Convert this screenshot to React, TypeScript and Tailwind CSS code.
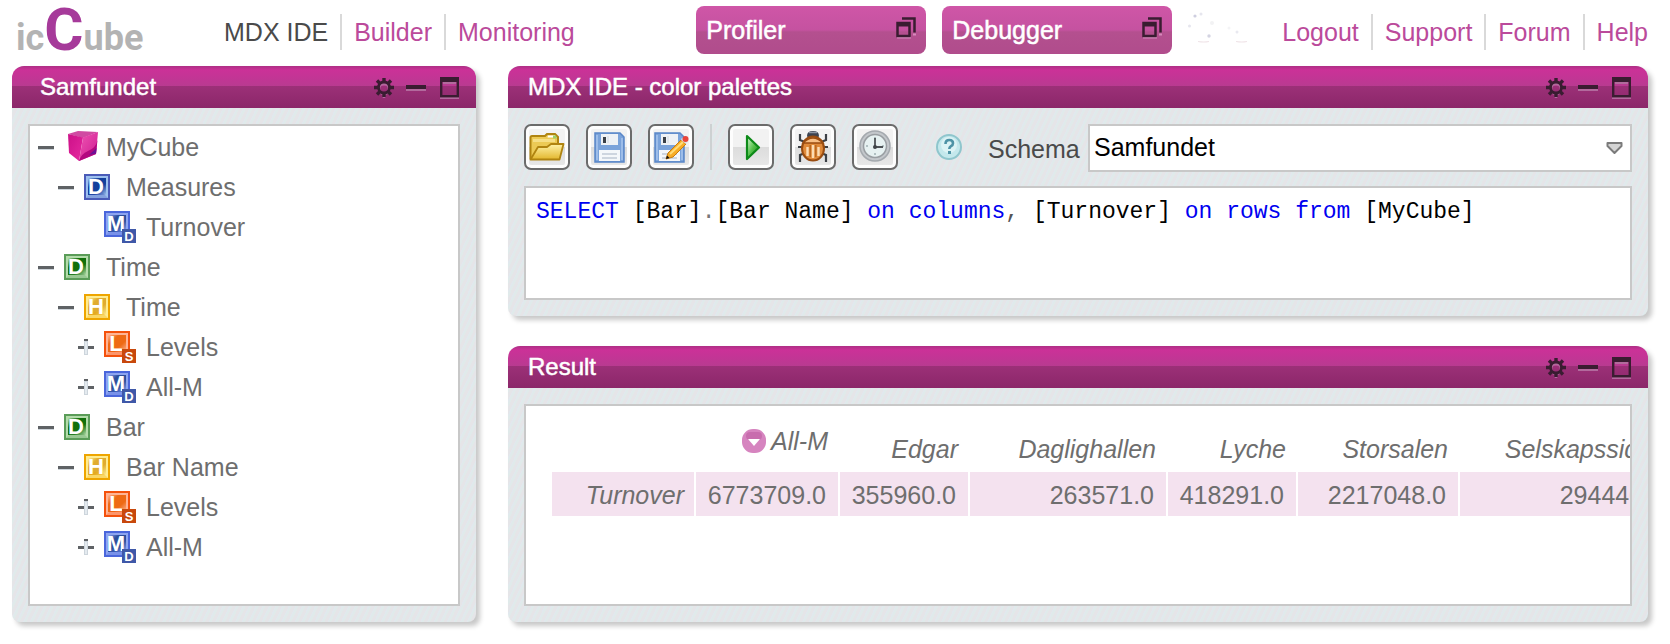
import { useState, type ReactNode } from "react";

const NAV = ["MDX IDE", "Builder", "Monitoring"];
const LINKS = ["Logout", "Support", "Forum", "Help"];

/* ---------- Icons ---------- */

function WindowIcon() {
  return (
    <svg width="20" height="22" viewBox="0 0 20 22" aria-hidden="true">
      <path d="M1 20.500h14M17 17.500h3" stroke="#d68abb" strokeWidth="2" />
      <path d="M6 1.500h12.500v14" fill="none" stroke="#3a1c31" strokeWidth="2.500" />
      <rect x="1.500" y="6" width="12" height="13" fill="none" stroke="#3a1c31" strokeWidth="2.500" />
      <path d="M1 8h13" stroke="#3a1c31" strokeWidth="3" />
    </svg>
  );
}

function GearIcon() {
  return (
    <svg width="20" height="24" viewBox="0 -2 20 24" aria-hidden="true">
      <g fill="none" stroke="#b26a9d" strokeWidth="2.500">
        <circle cx="10" cy="12" r="5" />
        <path d="M10 18v3" />
      </g>
      <g fill="none" stroke="#3a1c31">
        <circle cx="10" cy="10.500" r="5.500" strokeWidth="2.800" />
        <path
          strokeWidth="3.400"
          d="M10 5V1M10 16v4M4.500 10.500H0M15.500 10.500H20M6.500 7 3 3.500M13.500 7 17 3.500M6.500 14 3 17.500M13.500 14l3.500 3.500"
        />
      </g>
    </svg>
  );
}

function MinimizeIcon() {
  return (
    <svg width="20" height="22" viewBox="0 0 20 22" aria-hidden="true">
      <rect y="13" width="20" height="2" fill="#b26a9d" />
      <rect y="9" width="20" height="4" fill="#3a1c31" />
    </svg>
  );
}

function MaximizeIcon() {
  return (
    <svg width="19" height="24" viewBox="0 -2 19 24" aria-hidden="true">
      <path d="M0 21h19M3 6h13" stroke="#b26a9d" strokeWidth="2" />
      <rect x="1.200" y="1.200" width="16.600" height="18" fill="none" stroke="#3a1c31" strokeWidth="2.400" />
      <path d="M0 2.500h19" stroke="#3a1c31" strokeWidth="5" />
    </svg>
  );
}

function ActivityDots() {
  return (
    <svg width="64" height="34" viewBox="0 0 64 34" aria-hidden="true">
      <circle cx="7" cy="4" r="1.600" fill="#cfcfe0" />
      <circle cx="13" cy="2" r="1.500" fill="#e6e6ee" />
      <circle cx="1.500" cy="14" r="1.500" fill="#e6e6ee" />
      <circle cx="24" cy="11" r="2" fill="#f2f2f4" />
      <circle cx="21" cy="24" r="1.700" fill="#d4d4e2" />
      <circle cx="49" cy="20" r="1.500" fill="#e9e9f0" />
      <circle cx="41" cy="16" r="1.500" fill="#f4f4f6" />
      <path d="M10 29.500q6 1 11 0M48 29.500q6 1 11 0" fill="none" stroke="#f0e4e8" strokeWidth="1.200" />
    </svg>
  );
}

function CubeIcon() {
  return (
    <svg width="32" height="32" viewBox="0 0 32 32" aria-hidden="true">
      <defs>
        <linearGradient id="cubeLeft" x1="0" y1="0" x2="1" y2="1">
          <stop offset="0" stopColor="#cc1088" />
          <stop offset="1" stopColor="#e62aa0" />
        </linearGradient>
        <linearGradient id="cubeRight" x1="0" y1="0" x2="1" y2="1">
          <stop offset="0" stopColor="#ee55b2" />
          <stop offset="1" stopColor="#cf1a92" />
        </linearGradient>
      </defs>
      <path d="M0 3 10 0l20 1-15 6z" fill="#d04aa2" />
      <path d="M0 3l15 3.500L11 30 1 22z" fill="url(#cubeLeft)" />
      <path d="M15 6.500 30 1l-2 22-17 7z" fill="url(#cubeRight)" />
      <path d="M29.500 9Q28 17 20 20q-7 3-9 10l17-7z" fill="#b3087f" />
      <path d="M28.500 17 21 24l7-1.500z" fill="#6d1296" />
    </svg>
  );
}

function LetterTile({
  letter,
  badge,
  edge,
  dark,
  light,
  badgeColor,
}: {
  letter: string;
  badge?: string;
  edge: string;
  dark: string;
  light: string;
  badgeColor?: string;
}) {
  const size = badge ? 32 : 26;
  const id = `tile-${letter}-${edge.slice(1)}`;
  return (
    <svg width={size} height={size} viewBox={`0 0 ${size} ${size}`} aria-hidden="true">
      <defs>
        <linearGradient id={id} x1="0" y1="0" x2="1" y2="1">
          <stop offset="0" stopColor={light} />
          <stop offset=".3" stopColor={dark} />
          <stop offset=".65" stopColor={dark} />
          <stop offset="1" stopColor={light} />
        </linearGradient>
      </defs>
      <rect width="26" height="26" fill={edge} />
      <rect x="2" y="2" width="22" height="22" fill={light} />
      <rect x="4" y="4" width="18" height="17" fill={`url(#${id})`} />
      <path d="M2 24 8 18h10l6 6z" fill={edge} opacity=".3" />
      <text
        x="12"
        y="20"
        textAnchor="middle"
        fontFamily="Liberation Sans, sans-serif"
        fontWeight="700"
        fontSize="22"
        fill="#fff"
      >
        {letter}
      </text>
      {badge && (
        <>
          <rect x="18" y="18" width="14" height="14" fill={badgeColor} />
          <text
            x="25"
            y="29.500"
            textAnchor="middle"
            fontFamily="Liberation Sans, sans-serif"
            fontWeight="700"
            fontSize="13"
            fill="#fff"
          >
            {badge}
          </text>
        </>
      )}
    </svg>
  );
}

const ICONS: Record<string, ReactNode> = {
  cube: <CubeIcon />,
  measures: <LetterTile letter="D" edge="#4a5bb8" dark="#14409c" light="#9cc0ee" />,
  member: <LetterTile letter="M" badge="D" edge="#4a66dc" dark="#2d4f9c" light="#8da4f0" badgeColor="#3f58a8" />,
  dimension: <LetterTile letter="D" edge="#5a9c58" dark="#12700c" light="#b4dcab" />,
  hierarchy: <LetterTile letter="H" edge="#eea500" dark="#e0ac30" light="#ffec90" />,
  level: <LetterTile letter="L" badge="S" edge="#f4510c" dark="#ee6a14" light="#ffb494" badgeColor="#c8480c" />,
};

function Toggle({ kind }: { kind: "minus" | "plus" | "none" }) {
  return (
    <svg width="16" height="18" viewBox="0 0 16 18" aria-hidden="true">
      {kind === "minus" && (
        <>
          <rect y="8" width="16" height="3" fill="#5f6265" />
          <rect y="11" width="16" height="1" fill="#cfd6dc" />
        </>
      )}
      {kind === "plus" && (
        <>
          <rect x="6" y="3" width="4" height="14" fill="#cdd5dc" />
          <rect x="6" y="1" width="4" height="2" fill="#5f6265" />
          <rect y="8" width="6" height="3" fill="#5f6265" />
          <rect x="10" y="8" width="6" height="3" fill="#5f6265" />
          <rect x="7" y="4" width="2" height="12" fill="#e4eaef" />
        </>
      )}
    </svg>
  );
}

function FolderIcon() {
  return (
    <svg width="36" height="28" viewBox="0 0 36 28" aria-hidden="true">
      <defs>
        <linearGradient id="folderFront" x1="0" y1="0" x2="0" y2="1">
          <stop offset="0" stopColor="#fff3a8" />
          <stop offset="1" stopColor="#e2b62c" />
        </linearGradient>
      </defs>
      <path d="M1.500 26V4.500q0-1.500 1.500-1.500h13l2-2h8l3 3v7" fill="#ecca55" stroke="#b08410" strokeWidth="2" />
      <path d="M19 2.500h7l1.500 2h-9z" fill="#fff" />
      <path d="M24 2.500h3l1 3h-4z" fill="#9ed068" />
      <path d="M4 6h22v3H4z" fill="#f6df86" />
      <path d="M1.500 26.500 9 14h9l4-3h12.500l-4 15.500z" fill="url(#folderFront)" stroke="#b08410" strokeWidth="1.800" strokeLinejoin="round" />
    </svg>
  );
}

function Floppy() {
  return (
    <>
      <path d="M1 1h25l4 4v25H1z" fill="#7ba3da" stroke="#5a87c8" strokeWidth="1.500" />
      <path d="M3 3v25M28 6v22" stroke="#a9c6ee" strokeWidth="1.500" />
      <rect x="7" y="2" width="17" height="11" fill="#eef1f5" />
      <rect x="9" y="5" width="3" height="6" fill="#3b4048" />
      <path d="M14 4v7" stroke="#d2d8e0" strokeWidth="1" />
      <rect x="5" y="18" width="21" height="11" fill="#f4f7fa" />
      <path d="M8 22h15M8 26h15" stroke="#c0cad6" strokeWidth="1.500" />
    </>
  );
}

function SaveIcon() {
  return (
    <svg width="31" height="31" viewBox="0 0 31 31" aria-hidden="true">
      <Floppy />
    </svg>
  );
}

function SaveAsIcon() {
  return (
    <svg width="36" height="31" viewBox="-1 0 36 31" aria-hidden="true">
      <Floppy />
      <path d="m12 27 2-6L27 8l5 4-13 13z" fill="#f7ad26" stroke="#c87c10" strokeWidth="1" />
      <path d="m16 22 13-12" stroke="#ffdc7a" strokeWidth="2" />
      <path d="m27 8 2-2.500 5 4-2 2.500z" fill="#dfe4ea" />
      <circle cx="31.500" cy="7" r="3" fill="#e8443a" />
      <path d="m12 27 1-3.500 2.500 2.500z" fill="#111" />
    </svg>
  );
}

function PlayIcon() {
  return (
    <svg width="20" height="28" viewBox="0 0 20 28" aria-hidden="true">
      <defs>
        <linearGradient id="playFill" x1="0" y1="0" x2="1" y2="1">
          <stop offset="0" stopColor="#e2f8de" />
          <stop offset=".5" stopColor="#55c24b" />
          <stop offset="1" stopColor="#0a7d10" />
        </linearGradient>
      </defs>
      <path d="M6 3 18 14.500 6 26z" fill="url(#playFill)" stroke="#0d8a18" strokeWidth="2.200" strokeLinejoin="round" />
    </svg>
  );
}

function BugIcon() {
  return (
    <svg width="32" height="34" viewBox="0 0 32 34" aria-hidden="true">
      <path
        d="M8 12 3 10V4M24 12l5-2V4M7 17H1M25 17h6M8 23l-5 2v7M24 23l5 2v7"
        fill="none"
        stroke="#3c4046"
        strokeWidth="2.200"
      />
      <path d="M10 6q0-5 6-5t6 5l-1 2H11z" fill="#3c4350" />
      <path d="M12 2.500h8" stroke="#8d96a4" strokeWidth="1.500" />
      <ellipse cx="16" cy="18.500" rx="11" ry="12" fill="#e08a3a" stroke="#9a4c10" strokeWidth="2" />
      <path d="M6 13q10-10 20 0z" fill="#f7be84" stroke="#9a4c10" strokeWidth="1.300" />
      <path d="M10.500 17v9M16 15v13M21.500 17v9" stroke="#fbdcb4" strokeWidth="2.400" />
      <path d="M13.200 15v12M18.800 15v12" stroke="#b0601c" strokeWidth="1.200" />
    </svg>
  );
}

function ClockIcon() {
  return (
    <svg width="34" height="34" viewBox="0 0 34 34" aria-hidden="true">
      <circle cx="17" cy="16" r="15" fill="#c3c7cb" stroke="#a4a9ae" strokeWidth="1.500" />
      <circle cx="17" cy="16" r="11.500" fill="#e6f1f1" stroke="#999ea2" strokeWidth="1.500" />
      <path d="M17 7v2M17 23v2M8 16h2M24 16h2" stroke="#9fb0b2" strokeWidth="1.500" />
      <path d="M17 8v9h8" fill="none" stroke="#4d5256" strokeWidth="1.800" />
      <circle cx="17" cy="17" r="2" fill="#3e4347" />
    </svg>
  );
}

function HelpIcon() {
  return (
    <svg width="26" height="26" viewBox="0 0 26 26" aria-hidden="true">
      <circle cx="13" cy="13" r="12" fill="#c4e8ec" stroke="#8fc6cd" strokeWidth="2" />
      <circle cx="13" cy="11" r="8" fill="#dcf3f5" />
      <path d="M9.500 10q0-4 3.800-4 3.700 0 3.700 3.200 0 1.800-2 3-1.700 1-1.700 2.800" fill="none" stroke="#4e93a6" strokeWidth="2.600" />
      <rect x="12" y="17" width="3" height="3" fill="#4e93a6" />
    </svg>
  );
}

function DropIcon() {
  return (
    <svg width="26" height="26" viewBox="0 0 26 26" aria-hidden="true">
      <rect x="1" y="1" width="24" height="24" rx="11" fill="#d684bf" />
      <rect x="5" y="4" width="16" height="8" rx="4" fill="#c86dae" />
      <path d="M7 11h12l-6 7z" fill="#fff" />
    </svg>
  );
}

/* ---------- Building blocks ---------- */

function Panel({
  title,
  wideTitle,
  className,
  children,
}: {
  title: string;
  wideTitle?: boolean;
  className?: string;
  children: ReactNode;
}) {
  return (
    <section
      className={`flex min-w-0 flex-col rounded-t-[12px] rounded-b-[8px] bg-[#e3e8e9] bg-[repeating-linear-gradient(115deg,#e0eaea_0_2px,#e5e5e8_2px_5px,#e1e8ee_5px_6px)] shadow-[4px_4px_5px_rgba(0,0,0,0.22)] ${className ?? ""}`}
    >
      <header
        className={`flex h-[42px] shrink-0 items-center rounded-t-[12px] bg-[linear-gradient(to_bottom,#ae2f85_0,#cb3198_4px,#b93a91_20px,#9c3078_20px,#8b2769_100%)] pr-[17px] text-white ${wideTitle ? "pl-7" : "pl-5"}`}
      >
        <h2 className="flex-1 text-[24px] leading-[42px] [-webkit-text-stroke:0.5px_white]">{title}</h2>
        <button type="button" aria-label="Settings" className="mr-3"><GearIcon /></button>
        <button type="button" aria-label="Minimize" className="mr-3.5"><MinimizeIcon /></button>
        <button type="button" aria-label="Maximize"><MaximizeIcon /></button>
      </header>
      {children}
    </section>
  );
}

function ToolButton({ label, children }: { label: string; children: ReactNode }) {
  return (
    <button
      type="button"
      aria-label={label}
      className="flex size-[46px] shrink-0 items-center justify-center rounded-[7px] border-2 border-[#6b6b6b] bg-[linear-gradient(to_bottom,#f2f2f2_50%,#dcdcdc_50%,#e9e9e9)] shadow-[inset_0_0_0_3px_#fdfdfd]"
    >
      {children}
    </button>
  );
}

type Node = { label: string; depth: 0 | 1 | 2; icon: string; toggle: "minus" | "plus" | "none" };

const TREE: Node[] = [
  { label: "MyCube", depth: 0, icon: "cube", toggle: "minus" },
  { label: "Measures", depth: 1, icon: "measures", toggle: "minus" },
  { label: "Turnover", depth: 2, icon: "member", toggle: "none" },
  { label: "Time", depth: 0, icon: "dimension", toggle: "minus" },
  { label: "Time", depth: 1, icon: "hierarchy", toggle: "minus" },
  { label: "Levels", depth: 2, icon: "level", toggle: "plus" },
  { label: "All-M", depth: 2, icon: "member", toggle: "plus" },
  { label: "Bar", depth: 0, icon: "dimension", toggle: "minus" },
  { label: "Bar Name", depth: 1, icon: "hierarchy", toggle: "minus" },
  { label: "Levels", depth: 2, icon: "level", toggle: "plus" },
  { label: "All-M", depth: 2, icon: "member", toggle: "plus" },
];

const INDENT = { 0: "pl-2", 1: "pl-7", 2: "pl-12" };

const COLUMNS = [
  { name: "All-M", value: "6773709.0", width: "w-[142px]" },
  { name: "Edgar", value: "355960.0", width: "w-[128px]" },
  { name: "Daglighallen", value: "263571.0", width: "w-[196px]" },
  { name: "Lyche", value: "418291.0", width: "w-[128px]" },
  { name: "Storsalen", value: "2217048.0", width: "w-[160px]" },
  { name: "Selskapssiden", value: "294440.0", width: "w-[216px]" },
];

const QUERY: [string, string][] = [
  ["SELECT", "text-[#0000f0]"],
  [" [Bar]", "text-black"],
  [".", "text-[#777]"],
  ["[Bar Name] ", "text-black"],
  ["on columns", "text-[#0000f0]"],
  [",", "text-[#555]"],
  [" [Turnover] ", "text-black"],
  ["on rows from", "text-[#0000f0]"],
  [" [MyCube]", "text-black"],
];

export default function App() {
  const [schema, setSchema] = useState("Samfundet");
  return (
    <div className="flex min-h-screen flex-col bg-white pr-[22px] pb-[22px] pl-3 font-['Liberation_Sans',Arial,sans-serif] text-[25px] text-[#6e6e6e]">
      <div className="flex h-[66px] items-start">
        <a href="#home" aria-label="icCube" className="ml-1 flex h-[60px] w-[196px] items-baseline font-[Roboto,sans-serif] text-[36px] leading-[60px] font-bold text-[#b3b3b3]">
          ic<span className="text-[60px] text-[#a63a9a]">C</span>ube
        </a>
        <nav className="mt-3.5 flex divide-x-2 divide-[#d9d9d9]">
          {NAV.map((item, i) => (
            <a
              key={item}
              href={`#${item}`}
              className={`px-3 leading-[36px] ${i === 0 ? "text-[#4a4a4a]" : "text-[#bb4a9b]"}`}
            >
              {item}
            </a>
          ))}
        </nav>
        <div className="mt-1.5 ml-auto flex gap-4">
          {["Profiler", "Debugger"].map((name) => (
            <button
              key={name}
              type="button"
              className="flex h-12 w-[230px] items-start justify-between rounded-[8px] bg-[linear-gradient(to_bottom,#cf56a7_0,#c552a0_50%,#b4508f_54%,#b04c8c_100%)] pr-2.5 pl-2.5 text-white"
            >
              <span className="leading-[48px] [-webkit-text-stroke:0.5px_white]">{name}</span>
              <span className="mt-[11px]"><WindowIcon /></span>
            </button>
          ))}
        </div>
        <div className="mt-3 ml-4 w-[82px]"><ActivityDots /></div>
        <nav className="mt-3.5 flex divide-x-2 divide-[#d9d9d9]">
          {LINKS.map((item) => (
            <a key={item} href={`#${item}`} className="px-3 leading-[36px] text-[#bb4a9b] last:pr-0">
              {item}
            </a>
          ))}
        </nav>
      </div>

      <div className="flex flex-1 gap-8">
        <Panel title="Samfundet" wideTitle className="w-[464px] shrink-0">
          <div className="m-4 flex-1 border-2 border-[#c8c8c8] bg-white pt-px">
            <ul>
              {TREE.map((node, i) => (
                <li key={i} className={`flex h-10 items-center ${INDENT[node.depth]}`}>
                  <button type="button" aria-label={`Toggle ${node.label}`} className="mr-2.5">
                    <Toggle kind={node.toggle} />
                  </button>
                  <span className="w-[42px]">
                    <span className={node.icon === "cube" ? "block pl-1" : "block"}>{ICONS[node.icon]}</span>
                  </span>
                  <span className="leading-10">{node.label}</span>
                </li>
              ))}
            </ul>
          </div>
        </Panel>

        <div className="flex min-w-0 flex-1 flex-col gap-[30px]">
          <Panel title="MDX IDE - color palettes">
            <div className="flex flex-col gap-3.5 p-4">
              <div className="flex h-12 items-start">
                <div className="flex gap-4">
                  <ToolButton label="Open"><FolderIcon /></ToolButton>
                  <ToolButton label="Save"><SaveIcon /></ToolButton>
                  <ToolButton label="Save as"><SaveAsIcon /></ToolButton>
                  <span className="h-[46px] w-0.5 bg-[#cdd1d2]" />
                  <ToolButton label="Run"><PlayIcon /></ToolButton>
                  <ToolButton label="Debug"><BugIcon /></ToolButton>
                  <ToolButton label="Schedule"><ClockIcon /></ToolButton>
                </div>
                <button type="button" aria-label="Help" className="mt-2.5 ml-[38px]"><HelpIcon /></button>
                <label htmlFor="schema" className="ml-[26px] w-[100px] leading-[50px] text-[#4a4a4a]">
                  Schema
                </label>
                <div className="relative flex-1">
                  <select
                    id="schema"
                    value={schema}
                    onChange={(e) => setSchema(e.target.value)}
                    className="h-12 w-full appearance-none rounded-none border-2 border-[#c8c8c8] bg-white pl-1 text-black"
                  >
                    <option>Samfundet</option>
                  </select>
                  <svg className="pointer-events-none absolute top-[17px] right-2" width="18" height="14" viewBox="0 0 18 14" aria-hidden="true">
                    <path d="M1.500 2h14v3L8.500 12 1.500 5z" fill="#d4d4d4" stroke="#7b7b7b" strokeWidth="2" strokeLinejoin="round" />
                  </svg>
                </div>
              </div>
              <div
                role="textbox"
                aria-label="MDX query"
                contentEditable
                suppressContentEditableWarning
                className="min-h-[114px] border-2 border-[#c8c8c8] bg-white px-2.5 pt-2 font-['Liberation_Mono','Courier_New',monospace] text-[23px] leading-[32px] whitespace-pre-wrap"
              >
                {QUERY.map(([text, color], i) => (
                  <span key={i} className={color}>{text}</span>
                ))}
              </div>
            </div>
          </Panel>

          <Panel title="Result" className="flex-1">
            <div className="m-4 flex-1 overflow-hidden border-2 border-[#c8c8c8] bg-white pt-4 pl-6">
              <table className="w-[1126px] table-fixed border-separate border-spacing-x-0.5 border-spacing-y-0">
                <thead>
                  <tr className="h-[50px] text-right italic">
                    <td className="w-[142px]" />
                    {COLUMNS.map((col, i) => (
                      <th key={col.name} scope="col" className={`pr-2.5 text-right font-normal ${col.width} ${i === 0 ? "align-top" : "align-bottom"}`}>
                        {i === 0 ? (
                          <span className="flex items-center justify-end gap-1 leading-[38px]">
                            <button type="button" aria-label="Drill"><DropIcon /></button>
                            {col.name}
                          </span>
                        ) : (
                          <span className="block pt-1 leading-[46px]">{col.name}</span>
                        )}
                      </th>
                    ))}
                  </tr>
                </thead>
                <tbody>
                  <tr className="h-11 text-right">
                    <th scope="row" className="bg-[#f4e2ef] pt-1 pr-2.5 text-right font-normal italic">Turnover</th>
                    {COLUMNS.map((col) => (
                      <td key={col.name} className="bg-[#f4e2ef] pt-1 pr-3">{col.value}</td>
                    ))}
                  </tr>
                </tbody>
              </table>
            </div>
          </Panel>
        </div>
      </div>
    </div>
  );
}
